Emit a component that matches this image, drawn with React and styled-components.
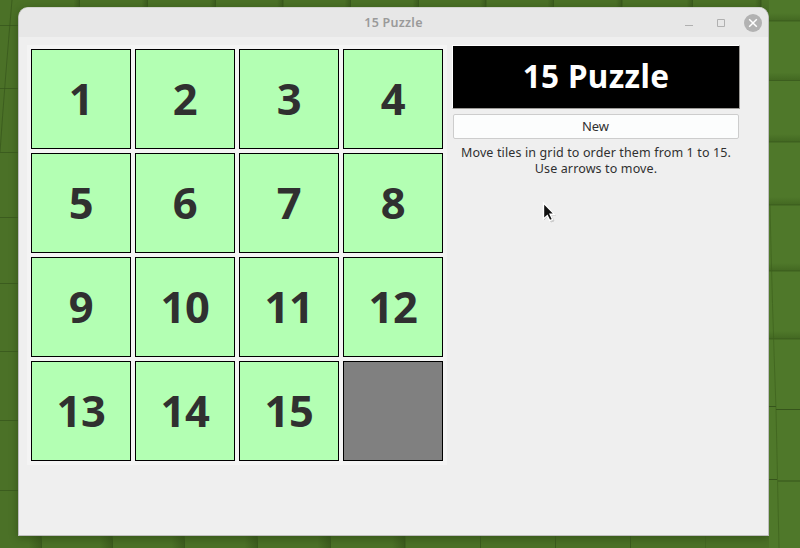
import React from "react";
import styled, { createGlobalStyle } from "styled-components";

const GlobalStyle = createGlobalStyle`
  *, *::before, *::after { box-sizing: border-box; }
  body { margin: 0; overflow: hidden; font-family: "Noto Sans", sans-serif; }
`;

const Desktop = styled.main`
  position: relative;
  width: 800px;
  height: 548px;
  padding: 7px 0 0 18px;
  overflow: hidden;
  background: #4b7127;
`;

const Wallpaper = styled.svg`
  position: absolute;
  inset: 0;
`;

const Window = styled.section`
  position: relative;
  width: 751px;
  height: 529px;
  border: 1px solid #bebebe;
  border-top-color: #d2d4cf;
  border-radius: 10px 10px 0 0;
  background: #efefef;
  overflow: hidden;
`;

const WindowShade = styled.div`
  width: 751px;
  height: 529px;
  border-radius: 10px 10px 0 0;
  box-shadow: 0 2px 9px rgba(20, 40, 0, 0.4);
`;

const TitleBar = styled.header`
  display: grid;
  grid-template-columns: 1fr auto 1fr;
  align-items: center;
  height: 29px;
  background: #e7e7e7;
`;

const WindowTitle = styled.h1`
  grid-column: 2;
  margin: 0;
  font-size: 12.5px;
  line-height: 18px;
  font-weight: 600;
  letter-spacing: 0.25px;
  color: #9a9a9a;
`;

const Controls = styled.div`
  display: flex;
  justify-content: flex-end;
  padding-right: 5px;
`;

const Content = styled.div`
  display: flex;
  gap: 5px;
  padding: 8px;
`;

const Board = styled.div`
  display: grid;
  grid-template-columns: repeat(4, 100px);
  grid-auto-rows: 100px;
  gap: 4px;
  padding: 4px;
  height: 420px;
  background: #f4f4f4;
`;

const Tile = styled.div`
  display: flex;
  align-items: center;
  justify-content: center;
  padding-bottom: 2px;
  border: 1px solid #000;
  background: ${(p) => (p.$empty ? "#808080" : "#b3ffb3")};
  color: #303030;
  font-size: 43.5px;
  line-height: 60px;
  font-weight: 700;
  letter-spacing: -0.5px;
`;

const SidePanel = styled.aside`
  display: flex;
  flex-direction: column;
  width: 288px;
`;

const Banner = styled.h2`
  display: flex;
  align-items: center;
  justify-content: center;
  height: 64px;
  margin: 0 0 5px;
  padding-bottom: 2px;
  border: 1px solid;
  border-color: #fff #9c9a97 #9c9a97 #fff;
  background: #000;
  color: #fff;
  font-size: 31.5px;
  line-height: 42px;
  font-weight: 700;
  letter-spacing: 0.35px;
`;

const NewButton = styled.button`
  height: 25px;
  margin: 0 1px;
  padding: 0 1px 2px 0;
  border: 1px solid #cdcdcd;
  border-radius: 2px;
  background: #fcfdfd;
  color: #303030;
  font: 13px/18px "Noto Sans", sans-serif;
`;

const Help = styled.p`
  margin: 6px 0 0;
  color: #303030;
  font-size: 12.5px;
  line-height: 16px;
  letter-spacing: 0.13px;
  text-align: center;
  white-space: nowrap;
`;

const Cursor = styled.svg`
  position: absolute;
  left: 541px;
  top: 200px;
`;

const topSeams = [79.5, 147.5, 215.5, 283, 350.5, 418.5, 486, 553.5, 622, 692.5, 761];
const bottomSeams = [41.5, 112.5, 184.5, 257.5, 330.5, 405, 480.5, 555.5, 630.5, 705.5];
const leftSeams = [25.5, 88.5, 152.5, 217.5, 283.5, 351.5, 420.5, 490.5];
const rightSeams = [21, 80.5, 142, 205, 271, 339];
const tiles = Array.from({ length: 15 }, (_, i) => i + 1);

function Background() {
  return (
    <Wallpaper width="800" height="548" viewBox="0 0 800 548" aria-hidden="true">
      <defs>
        <linearGradient id="seamX">
          <stop offset="0" stopColor="#263e10" stopOpacity="0" />
          <stop offset="1" stopColor="#263e10" stopOpacity="0.4" />
        </linearGradient>
        <linearGradient id="seamY" x2="0" y2="1">
          <stop offset="0" stopColor="#2f4f14" stopOpacity="0" />
          <stop offset="1" stopColor="#2f4f14" stopOpacity="0.4" />
        </linearGradient>
      </defs>
      <rect x="769" width="31" height="548" fill="#4f782a" />
      {topSeams.map((x) => (
        <g key={x}>
          <rect x={x - 6} width="6" height="9" fill="url(#seamX)" />
          <path d={`M${x} 0v8`} stroke="#36551b" opacity="0.8" />
        </g>
      ))}
      {bottomSeams.map((x, i) => (
        <g key={x}>
          {i < 6 && <rect x={x - 13} y="535" width="13" height="13" fill="url(#seamX)" />}
          <path d={`M${x} 535v13`} stroke="#36551b" opacity={i === 9 ? 0.3 : 0.8} />
        </g>
      ))}
      {leftSeams.map((y) => (
        <path key={y} d={`M0 ${y}h18`} stroke="#36551b" opacity="0.75" />
      ))}
      <path d="M12 0Q5 80 0 152" fill="none" stroke="#36551b" opacity="0.7" />
      {rightSeams.map((y) => (
        <g key={y}>
          <rect x="769" y={y - 8} width="31" height="8" fill="url(#seamY)" />
          <path d={`M769 ${y}h31`} stroke="#36551b" opacity="0.65" />
        </g>
      ))}
      <path d="M770 205Q772 300 776 409L779 548" fill="none" stroke="#3d611d" opacity="0.7" />
      <path d="M769 406.5h7M776 409.5h24M769 479.5h8M778 481h22" stroke="#36551b" />
    </Wallpaper>
  );
}

export default function App() {
  return (
    <>
      <GlobalStyle />
      <Desktop>
        <Background />
        <WindowShade>
          <Window>
            <TitleBar>
              <WindowTitle>15 Puzzle</WindowTitle>
              <Controls>
                <svg width="82" height="20" viewBox="0 0 82 20" fill="none" aria-hidden="true">
                  <path d="M4 12.5h8" stroke="#b0b0b0" />
                  <path d="M36.5 6.5h7v7h-7z" stroke="#b0b0b0" />
                  <circle cx="72" cy="10" r="9" fill="#b2b2b2" />
                  <path d="m68.2 6.2 7.6 7.6m0-7.6-7.6 7.6" stroke="#fff" strokeWidth="1.5" />
                </svg>
              </Controls>
            </TitleBar>
            <Content>
              <Board>
                {tiles.map((n) => (
                  <Tile key={n}>{n}</Tile>
                ))}
                <Tile $empty />
              </Board>
              <SidePanel>
                <Banner>15 Puzzle</Banner>
                <NewButton type="button">New</NewButton>
                <Help>
                  Move tiles in grid to order them from 1 to 15.
                  <br />
                  Use arrows to move.
                </Help>
              </SidePanel>
            </Content>
          </Window>
        </WindowShade>
        <Cursor width="18" height="26" viewBox="0 0 18 26" aria-hidden="true">
          <path d="M3 4v16l4-4 3 6 3-1-3-6h5z" fill="#999" stroke="#999" opacity="0.4" />
          <path
            d="M2.5 3v16l3.8-3.4 2.4 5 2.8-1.3-2.4-5h4.4z"
            fill="#111"
            stroke="#fff"
            strokeWidth="1.4"
          />
        </Cursor>
      </Desktop>
    </>
  );
}
